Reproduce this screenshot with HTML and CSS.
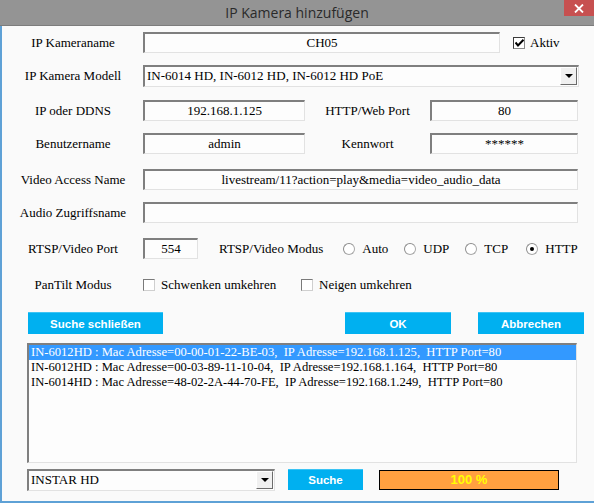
FILE: index.html
```html
<!DOCTYPE html>
<html lang="de">
<head>
<meta charset="utf-8">
<title>IP Kamera hinzufügen</title>
<link rel="stylesheet" href="styles.css">
</head>
<body>
<div class="titlebar">
  <span class="title">IP Kamera hinzufügen</span>
  <div class="close">
    <svg width="10" height="9" viewBox="0 0 10 9"><path d="M1 0.5 L9 8.5 M9 0.5 L1 8.5" stroke="#fff" stroke-width="1.8" fill="none"/></svg>
  </div>
</div>
<div class="content">
  <div class="row">
    <span class="lbl">IP Kameraname</span>
    <div class="field w357">CH05</div>
    <span class="check ml13"><span class="box"><svg width="9" height="8" viewBox="0 0 9 8"><path d="M0.5 3.5 L3 6.5 L8.5 0.8" stroke="#000" stroke-width="2" fill="none"/></svg></span>Aktiv</span>
  </div>
  <div class="row g12">
    <span class="lbl">IP Kamera Modell</span>
    <div class="field select w436"><span class="seltext">IN-6014 HD, IN-6012 HD, IN-6012 HD PoE</span><span class="arrow"><i></i></span></div>
  </div>
  <div class="row g14">
    <span class="lbl">IP oder DDNS</span>
    <div class="field w162">192.168.1.125</div>
    <span class="mid">HTTP/Web Port</span>
    <div class="field w148">80</div>
  </div>
  <div class="row g12">
    <span class="lbl">Benutzername</span>
    <div class="field w162">admin</div>
    <span class="mid">Kennwort</span>
    <div class="field w148">******</div>
  </div>
  <div class="row g15">
    <span class="lbl">Video Access Name</span>
    <div class="field w435">livestream/11?action=play&amp;media=video_audio_data</div>
  </div>
  <div class="row g12">
    <span class="lbl">Audio Zugriffsname</span>
    <div class="field w435"></div>
  </div>
  <div class="row g15">
    <span class="lbl">RTSP/Video Port</span>
    <div class="field w55">554</div>
    <span class="modus">RTSP/Video Modus</span>
    <div class="radios">
      <span class="radio"><span class="circle"></span>Auto</span>
      <span class="radio"><span class="circle"></span>UDP</span>
      <span class="radio"><span class="circle"></span>TCP</span>
      <span class="radio"><span class="circle on"></span>HTTP</span>
    </div>
  </div>
  <div class="row g15">
    <span class="lbl">PanTilt Modus</span>
    <span class="check w158"><span class="box light"></span>Schwenken umkehren</span>
    <span class="check"><span class="box light"></span>Neigen umkehren</span>
  </div>
  <div class="row btnrow">
    <div class="btn b-search">Suche schließen</div>
    <div class="btn b-ok">OK</div>
    <div class="btn b-cancel">Abbrechen</div>
  </div>
  <div class="list">
    <div class="item sel">IN-6012HD : Mac Adresse=00-00-01-22-BE-03,  IP Adresse=192.168.1.125,  HTTP Port=80</div>
    <div class="item">IN-6012HD : Mac Adresse=00-03-89-11-10-04,  IP Adresse=192.168.1.164,  HTTP Port=80</div>
    <div class="item">IN-6014HD : Mac Adresse=48-02-2A-44-70-FE,  IP Adresse=192.168.1.249,  HTTP Port=80</div>
  </div>
  <div class="row bottom">
    <div class="field select w248"><span class="seltext">INSTAR HD</span><span class="arrow"><i></i></span></div>
    <div class="btn b-suche">Suche</div>
    <div class="progress">100 %</div>
  </div>
</div>
</body>
</html>
```
FILE: styles.css
```css
* { box-sizing: border-box; }
html, body { margin: 0; padding: 0; }
body {
  width: 594px;
  height: 503px;
  overflow: hidden;
  background: #fafafa;
  font-family: "Liberation Serif", "Times New Roman", serif;
  font-size: 13px;
  color: #000;
}
.titlebar {
  height: 26px;
  background: #949494;
  border-bottom: 1px solid #7d7d7d;
  display: flex;
  align-items: center;
  justify-content: center;
  position: relative;
}
.title {
  font-family: "Open Sans", "Noto Sans", sans-serif;
  font-size: 14px;
  color: #2a2a2a;
  margin-top: -1px;
}
.close {
  position: absolute;
  top: 0;
  right: 0;
  width: 30px;
  height: 16px;
  background: #c75050;
  display: flex;
  align-items: center;
  justify-content: center;
}
.content {
  height: 477px;
  border-left: 2px solid #5ea1d6;
  border-bottom: 2px solid #5ea1d6;
  padding: 6px 0 0 6px;
  display: flex;
  flex-direction: column;
}
.row { display: flex; align-items: center; height: 21px; flex: none; }
.g12 { margin-top: 12px; }
.g14 { margin-top: 14px; }
.g15 { margin-top: 15px; }
.lbl { width: 130px; margin-right: 5px; text-align: center; white-space: nowrap; }
.field {
  height: 21px;
  background: #fdfdfd;
  border-style: solid;
  border-width: 2px 1px 1px 2px;
  border-color: #7f7f7f #e2e2e2 #e2e2e2 #7f7f7f;
  display: flex;
  align-items: center;
  justify-content: center;
  white-space: nowrap;
  overflow: hidden;
  padding-bottom: 1px;
}
.w357 { width: 357px; }
.w436 { width: 436px; height: 22px; }
.w162 { width: 162px; }
.w148 { width: 148px; }
.w435 { width: 435px; }
.w55 { width: 55px; }
.w248 { width: 248px; }
.mid { width: 125px; text-align: center; white-space: nowrap; }
.select { justify-content: space-between; padding: 0 0 0 2px; }
.seltext { white-space: nowrap; }
.arrow {
  width: 17px;
  height: 18px;
  margin-right: 1px;
  background: #f0f0f0;
  border-style: solid;
  border-width: 1px;
  border-color: #ffffff #6b6b6b #6b6b6b #ffffff;
  display: flex;
  align-items: center;
  justify-content: center;
}
.arrow i {
  width: 0;
  height: 0;
  border-left: 4px solid transparent;
  border-right: 4px solid transparent;
  border-top: 4px solid #000;
}
.check { display: flex; align-items: center; white-space: nowrap; }
.ml13 { margin-left: 13px; }
.w158 { width: 158px; }
.box {
  width: 12px;
  height: 12px;
  margin-right: 5px;
  background: #fff;
  border-style: solid;
  border-width: 1px;
  border-color: #3c3c3c #8a8a8a #8a8a8a #3c3c3c;
  display: flex;
  align-items: center;
  justify-content: center;
}
.box.light { border-color: #7a7a7a #cfcfcf #cfcfcf #7a7a7a; margin-right: 6px; }
.modus { margin-left: 21px; white-space: nowrap; }
.radios { display: flex; margin-left: 20px; }
.radio { width: 61px; display: flex; align-items: center; white-space: nowrap; }
.circle {
  width: 12px;
  height: 12px;
  border-radius: 50%;
  background: #fff;
  border: 1px solid #a8a8a8;
  border-top-color: #8c8c8c;
  border-left-color: #8c8c8c;
  margin-right: 7px;
  display: flex;
  align-items: center;
  justify-content: center;
}
.circle.on::after {
  content: "";
  width: 4px;
  height: 4px;
  border-radius: 50%;
  background: #000;
}
.btnrow { margin-top: 17px; height: 22px; }
.btn {
  height: 22px;
  background: #00b0f0;
  color: #fff;
  font-family: "Liberation Sans", Arial, sans-serif;
  font-weight: bold;
  font-size: 11.5px;
  display: flex;
  align-items: center;
  justify-content: center;
  border-top: 1px solid #3cc4f4;
}
.b-search { margin-left: 20px; width: 135px; }
.b-ok { margin-left: 182px; width: 106px; }
.b-cancel { margin-left: 27px; width: 106px; }
.list {
  margin-top: 9px;
  margin-left: 19px;
  width: 550px;
  height: 120px;
  flex: none;
  background: #fdfdfd;
  border-style: solid;
  border-width: 2px 1px 1px 2px;
  border-color: #7f7f7f #e2e2e2 #e2e2e2 #7f7f7f;
}
.item { height: 15px; line-height: 15px; padding-left: 2px; white-space: pre; font-size: 12.6px; }
.item.sel { background: #3399ff; color: #fff; }
.bottom { margin-top: 6px; margin-left: 19px; }
.bottom .select { height: 22px; }
.b-suche { margin-left: 13px; width: 75px; height: 21px; }
.progress {
  margin-left: 16px;
  width: 180px;
  height: 20px;
  background: #ffa040;
  border: 1px solid #000;
  color: #ffff00;
  font-family: "Liberation Sans", Arial, sans-serif;
  font-weight: bold;
  font-size: 13px;
  display: flex;
  align-items: center;
  justify-content: center;
}
```
